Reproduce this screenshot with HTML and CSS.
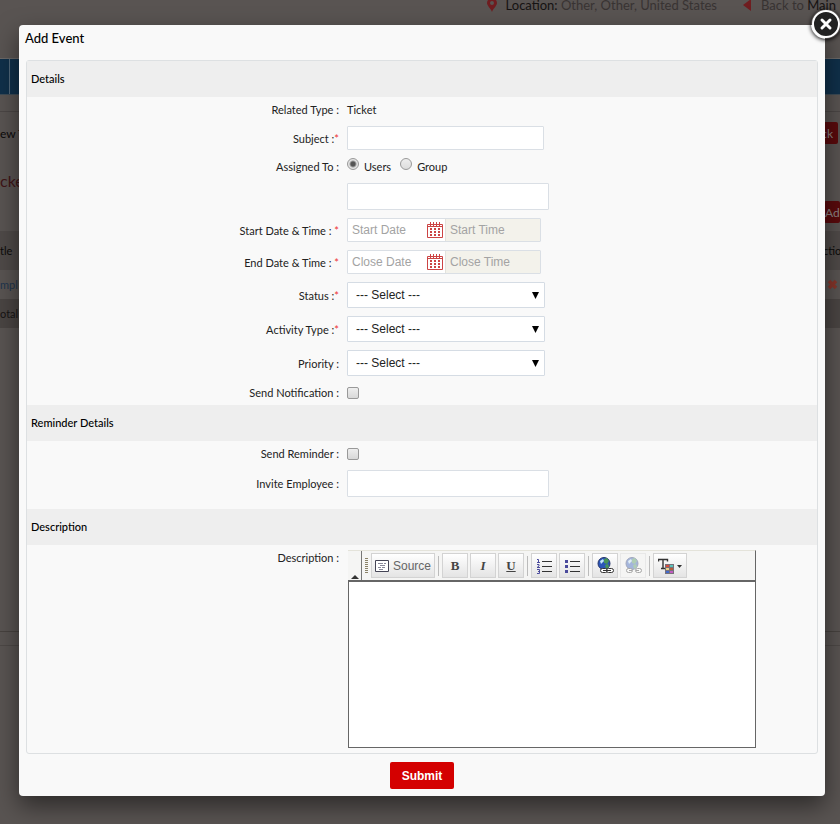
FILE: index.html
```html
<!DOCTYPE html>
<html lang="en">
<head>
<meta charset="utf-8">
<title>Add Event</title>
<link rel="stylesheet" href="styles.css">
</head>
<body>
<div class="page">
  <header class="topbar">
    <svg class="pin" width="10" height="14" viewBox="0 0 10 14"><path fill="#6f1d20" fill-rule="evenodd" d="M5 0a5 5 0 0 0-5 5c0 3 3.600 5 5 9 1.400-4 5-6 5-9a5 5 0 0 0-5-5zM5 3a2 2 0 1 1 0 4 2 2 0 0 1 0-4z"/></svg>
    <span class="place"><b>Location:</b> Other, Other, United States</span>
    <svg class="back-arrow" width="8" height="12" viewBox="0 0 8 12"><path fill="#6f1d20" d="M8 0v12L0 6z"/></svg>
    <span class="back">Back to <b>Main P</b></span>
  </header>
  <nav class="nav"><span class="nav-tab"></span></nav>
  <div class="title-row"><span class="page-title">ew T</span><button class="dark-button" type="button">ck</button></div>
  <div class="heading-row"><span class="ticket-title">cke</span></div>
  <div class="add-row"><button class="dark-button add" type="button">Add</button></div>
  <div class="list-row list-head"><span>tle</span><span class="head-action">ctio</span></div>
  <div class="list-row list-item"><a href="#">mpl</a><svg width="11" height="11" viewBox="0 0 11 11"><path d="M2 2l7 7M9 2l-7 7" stroke="#86352a" stroke-width="3.500"/></svg></div>
  <div class="list-row list-total"><span>otal R</span></div>
  <div class="list-end"></div>
  <footer class="footer"></footer>
</div>

<div class="overlay">
  <div class="modal" role="dialog" aria-labelledby="modal-title">
    <button class="close" type="button" aria-label="Close">
      <svg width="30" height="30" viewBox="0 0 30 30"><circle cx="15" cy="15" r="13" fill="#222" stroke="#fff" stroke-width="2"/><path d="M11 11l8 8M19 11l-8 8" stroke="#fff" stroke-width="3" stroke-linecap="round"/></svg>
    </button>
    <h1 class="modal-title" id="modal-title">Add Event</h1>
    <form>
      <div class="panel">
        <h2 class="section-title">Details</h2>
        <div class="fields">
          <div class="row"><span class="label">Related Type :</span><span>Ticket</span></div>
          <div class="row"><label class="label" for="subject">Subject :<i>*</i></label><input class="text" id="subject" type="text"></div>
          <div class="row"><span class="label">Assigned To :</span>
            <div class="radios">
              <input class="radio" type="radio" name="assigned" id="users" checked><label for="users">Users</label>
              <input class="radio" type="radio" name="assigned" id="group"><label for="group">Group</label>
            </div>
          </div>
          <div class="row"><span></span><input class="text tokens" type="text" aria-label="Assigned users"></div>
          <div class="row"><label class="label" for="start-date">Start Date &amp; Time : <i>*</i></label>
            <div class="datetime"><input class="date" id="start-date" type="text" placeholder="Start Date">
              <button class="calendar" type="button" aria-label="Pick start date"><svg width="16" height="17" viewBox="0 0 16 17"><path d="M.5 2.500h15v13h-15z" fill="#fff" stroke="#c44"/><path d="M1 4.500h14" stroke="#c44"/><path d="M3.500 0v4M6.500 0v4M9.500 0v4M12.500 0v4" stroke="#c44"/><path d="M3 7h10M3 10h10M3 13h10" stroke="#c44" stroke-width="2" stroke-dasharray="2"/></svg></button>
              <input class="time" type="text" placeholder="Start Time" aria-label="Start Time"></div></div>
          <div class="row"><label class="label" for="end-date">End Date &amp; Time : <i>*</i></label>
            <div class="datetime"><input class="date" id="end-date" type="text" placeholder="Close Date">
              <button class="calendar" type="button" aria-label="Pick close date"><svg width="16" height="17" viewBox="0 0 16 17"><path d="M.5 2.500h15v13h-15z" fill="#fff" stroke="#c44"/><path d="M1 4.500h14" stroke="#c44"/><path d="M3.500 0v4M6.500 0v4M9.500 0v4M12.500 0v4" stroke="#c44"/><path d="M3 7h10M3 10h10M3 13h10" stroke="#c44" stroke-width="2" stroke-dasharray="2"/></svg></button>
              <input class="time" type="text" placeholder="Close Time" aria-label="Close Time"></div></div>
          <div class="row"><label class="label" for="status">Status :<i>*</i></label><div class="select"><select id="status"><option>--- Select ---</option></select><svg width="7" height="7" viewBox="0 0 7 7"><path d="M0 0h7L3.500 7z"/></svg></div></div>
          <div class="row"><label class="label" for="activity">Activity Type :<i>*</i></label><div class="select"><select id="activity"><option>--- Select ---</option></select><svg width="7" height="7" viewBox="0 0 7 7"><path d="M0 0h7L3.500 7z"/></svg></div></div>
          <div class="row"><label class="label" for="priority">Priority :</label><div class="select"><select id="priority"><option>--- Select ---</option></select><svg width="7" height="7" viewBox="0 0 7 7"><path d="M0 0h7L3.500 7z"/></svg></div></div>
          <div class="row"><label class="label" for="notify">Send Notification :</label><input class="check" id="notify" type="checkbox"></div>
        </div>
        <h2 class="section-title">Reminder Details</h2>
        <div class="fields reminder">
          <div class="row"><label class="label" for="remind">Send Reminder :</label><input class="check" id="remind" type="checkbox"></div>
          <div class="row"><label class="label" for="invite">Invite Employee :</label><input class="text tokens" id="invite" type="text"></div>
        </div>
        <h2 class="section-title">Description</h2>
        <div class="fields">
          <div class="row row-top"><label class="label" for="description">Description :</label>
            <div class="editor">
              <div class="toolbar">
                <button class="collapse" type="button" aria-label="Collapse toolbar"><svg width="8" height="4" viewBox="0 0 8 4"><path d="M0 4l4-4 4 4z" fill="#333"/></svg></button>
                <span class="grip"></span>
                <button class="tool source" type="button"><svg width="14" height="12" viewBox="0 0 14 12"><path d="M.5.5h13v11H.5z" fill="#fff" stroke="#445"/><path d="M3 3.500h5M9 3.500h2M5 5.500h5M3 7.500h3M7 7.500h3M4 9.500h4" stroke="#889"/></svg>Source</button>
                <span class="divider"></span>
                <button class="tool glyph" type="button">B</button>
                <button class="tool glyph italic" type="button">I</button>
                <button class="tool glyph under" type="button">U</button>
                <span class="divider"></span>
                <button class="tool" type="button" aria-label="Numbered list"><svg width="16" height="16" viewBox="0 0 16 16"><path d="M6 3.500h10M6 8.500h10M6 13.500h10" stroke="#333"/><path d="M1 1.500h1.500v3M1 4.500h3M1 6.500h2v1.500l-2 1.500h3M1 11.500h2.500v4H1M2 13.500h1" fill="none" stroke="#4a4a9c"/></svg></button>
                <button class="tool" type="button" aria-label="Bulleted list"><svg width="16" height="16" viewBox="0 0 16 16"><path d="M6 3.500h10M6 8.500h10M6 13.500h10" stroke="#333"/><path d="M1 2h3v3H1zM1 7h3v3H1zM1 12h3v3H1z" fill="#4a4a9c"/></svg></button>
                <span class="divider"></span>
                <button class="tool" type="button" aria-label="Link"><svg width="17" height="17" viewBox="0 0 17 17"><circle cx="7" cy="6.500" r="6" fill="#2c56b8" stroke="#26356b"/><path d="M7 2l3-1 2 3-2 3-3-1zM8 8l3-1 1 3-3 2z" fill="#489458"/><path d="M3 4l3-2 1 2-3 3z" fill="#c4e6fa"/><rect x="3.500" y="11.500" width="7" height="4" rx="2" fill="#fff" stroke="#333"/><rect x="9.500" y="11.500" width="7" height="4" rx="2" fill="#fff" stroke="#333"/><path d="M6 13.500h8" stroke="#333"/></svg></button>
                <button class="tool off" type="button" aria-label="Unlink" disabled><svg width="17" height="17" viewBox="0 0 17 17"><circle cx="7" cy="6.500" r="6" fill="#2c56b8" stroke="#26356b"/><path d="M7 2l3-1 2 3-2 3-3-1zM8 8l3-1 1 3-3 2z" fill="#489458"/><path d="M3 4l3-2 1 2-3 3z" fill="#c4e6fa"/><rect x="1.500" y="11.500" width="6" height="4" rx="2" fill="#fff" stroke="#333"/><rect x="10.500" y="11.500" width="6" height="4" rx="2" fill="#fff" stroke="#333"/><path d="M4 13.500h3M11 13.500h3" stroke="#333"/></svg></button>
                <span class="divider"></span>
                <button class="tool colour" type="button" aria-label="Text colour"><svg width="25" height="16" viewBox="0 0 25 16"><path d="M.5 3.500v-2h9v2M5 1.500v9M3 10.500h4" fill="none" stroke="#333" stroke-width="1.400"/><path d="M7 6h9v10H7z" fill="#78727a"/><path d="M8 7h3v2H8z" fill="#d94c3c"/><path d="M12 7h3v2h-3z" fill="#5cc3ba"/><path d="M8 10h3v2H8z" fill="#e8d18a"/><path d="M12 10h3v2h-3z" fill="#b65d38"/><path d="M8 13h3v2H8z" fill="#4169cc"/><path d="M12 13h3v2h-3z" fill="#c25bc2"/><path d="M19 7h5l-2.500 3z" fill="#333"/></svg></button>
              </div>
              <textarea class="editor-text" id="description"></textarea>
            </div>
          </div>
        </div>
      </div>
      <div class="actions"><button class="submit" type="submit">Submit</button></div>
    </form>
  </div>
</div>
</body>
</html>
```
FILE: styles.css
```css
* { box-sizing: border-box; }
body {
  margin: 0;
  min-height: 100vh;
  overflow: hidden;
  background: #595452;
  color: #222;
  font: 11px/17px Lato, sans-serif;
}
button, input, select, textarea { margin: 0; font-family: "Liberation Sans", Arial, sans-serif; }
button { padding: 0; cursor: pointer; }

/* Dimmed page */
.page { overflow: hidden; height: 100vh; display: flex; flex-direction: column; }
.topbar {
  flex: none;
  display: flex;
  align-items: flex-start;
  justify-content: flex-end;
  height: 58px;
  white-space: nowrap;
  color: #383332;
  font-size: 13px;
  line-height: 11px;
}
.topbar b { font-weight: 400; color: #161313; }
.pin { margin-right: 9px; margin-top: -2px; }
.place { margin-right: 26px; }
.back-arrow { margin-right: 10px; margin-top: -1px; }
.back { width: 79px; }
.nav { flex: none; height: 37px; background: #10304a; border-top: 1px solid #6b6867; border-bottom: 1px solid #3d4b55; }
.nav-tab { display: block; width: 10px; height: 100%; border-right: 1px solid #52687a; }
.title-row {
  flex: none;
  display: flex;
  justify-content: space-between;
  align-items: center;
  height: 43px;
  margin-top: 16px;
  border-top: 1px solid #4b4645;
  padding-right: 2px;
}
.page-title { color: #0c0a0a; font-size: 12px; }
.dark-button {
  width: 26px;
  height: 22px;
  border: 0;
  border-radius: 2px;
  background: #590a0c;
  color: #8b8383;
  font: 12px Lato, sans-serif;
  text-align: right;
  padding-right: 5px;
}
.heading-row { flex: none; height: 47px; padding-top: 18px; }
.ticket-title { color: #3f1517; font-size: 16px; }
.add-row { flex: none; display: flex; justify-content: flex-end; height: 30px; }
.add { padding: 0 0 0 1px; width: 16px; overflow: hidden; text-align: left; }
.list-row { flex: none; display: flex; justify-content: space-between; align-items: center; white-space: nowrap; color: #171414; }
.list-row svg { margin-right: 2px; }
.list-head { height: 39px; background: #4f4a48; color: #0c0a0a; }
.head-action { width: 17px; overflow: hidden; }
.list-item { height: 29px; }
.list-item a { color: #1d344e; text-decoration: none; }
.list-total { height: 29px; background: #4a4543; }
.list-end { flex: none; height: 304px; border-bottom: 1px solid #47423f; }
.footer { flex: auto; margin-top: 13px; border-top: 1px solid #4d4846; }

/* Dialog */
.overlay { position: absolute; inset: 0; padding: 25px 15px 28px 19px; }
.modal {
  position: relative;
  padding: 0 7px 7px;
  border-radius: 4px;
  background: #f9f9f9;
  box-shadow: 0 10px 25px rgba(0, 0, 0, .5);
}
.close { position: absolute; top: -16px; right: -16px; width: 30px; height: 30px; border: 0; border-radius: 50%; background: none; box-shadow: 0 1px 4px #000; }
.close svg { display: block; }
.modal-title { margin: 0 -1px; height: 35px; padding-top: 5px; color: #000; font-size: 13px; font-weight: 500; line-height: 17px; }
.panel { border: 1px solid #dde0e2; border-radius: 3px; }
.section-title { margin: 0; padding: 0 4px; background: #eee; color: #000; font-size: 11px; font-weight: 500; line-height: 36px; }
.fields { display: grid; gap: 8px; padding: 4px 0; }
.reminder { padding-bottom: 12px; }
.row { display: grid; grid-template-columns: 312px 1fr; column-gap: 8px; align-items: center; min-height: 17px; }
.row-top { align-items: start; }
.label { text-align: right; }
.label i { color: #e33; font-style: normal; }
.text { width: 197px; height: 24px; border: 1px solid #dadfe5; border-radius: 1px; background: #fff; padding: 0 4px; font-size: 13px; }
.tokens { width: 202px; height: 27px; }

.radios { display: flex; align-items: center; height: 17px; }
.radios label { margin: 0 9px 0 5px; }
.radio { appearance: none; align-self: flex-start; width: 12px; height: 12px; border: 1px solid #999; border-radius: 50%; background: linear-gradient(#eee, #ddd); }
.radio:checked { background: radial-gradient(circle, #555 0 2px, #e4e4e4 4px); }
.check { appearance: none; width: 12px; height: 12px; border: 1px solid #999; border-radius: 2px; background: linear-gradient(#eee, #d8d8d8); }

.datetime { display: flex; align-items: center; width: 194px; height: 24px; border: 1px solid #dadfe5; border-radius: 1px; background: #fff; }
.datetime input { height: 22px; border: 0; padding: 0 4px; font-size: 12px; background: none; min-width: 0; }
.datetime input::placeholder { color: #a3a3a3; opacity: 1; }
.datetime .date { width: 79px; }
.datetime .time { flex: 1; margin-left: 2px; border-left: 1px solid #e3e3dd; background: #f3f2eb; }
.calendar { width: 16px; height: 18px; border: 0; background: none; }
.calendar svg { display: block; }

.select { position: relative; width: 198px; }
.select select { appearance: none; display: block; width: 100%; height: 26px; border: 1px solid #d5dce4; border-radius: 1px; background: #fff; color: #222; padding: 0 8px; font-size: 12px; }
.select svg { position: absolute; right: 6px; top: 10px; pointer-events: none; }

/* Rich text editor */
.editor { width: 408px; max-width: 100%; margin: 1px 0 1px 1px; }
.toolbar { display: flex; align-items: center; height: 30px; border-top: 1px solid #e4e3da; border-right: 1px solid #666; background: #f5f5f4; gap: 2px; }
.collapse { display: flex; align-items: flex-end; justify-content: center; align-self: stretch; width: 14px; border: 0; border-right: 1px solid #777; background: none; padding-bottom: 1px; }
.grip { width: 3px; height: 16px; margin: 0 1px; background: repeating-linear-gradient(#8a8268 0 1px, transparent 1px 2px); }
.tool { display: flex; align-items: center; justify-content: center; width: 26px; height: 25px; border: 1px solid #d3d3d3; background: linear-gradient(#fff, #e4e4e4); color: #444; font-size: 12px; }
.source { width: 64px; gap: 4px; color: #666; }
.glyph { font: bold 13px "Liberation Serif", serif; }
.italic { font-style: italic; }
.under { text-decoration: underline; }
.off { border-color: #e8e8e8; background: #f5f5f4; }
.off svg { opacity: .4; }
.colour { width: 34px; }
.divider { width: 1px; height: 20px; margin: 0 1px; background: #bbb; }
.editor-text { display: block; width: 100%; height: 168px; border: 1px solid #666; border-top: 2px solid #666; border-radius: 0; resize: none; background: #fff; padding: 4px; font-size: 12px; }

.actions { display: flex; justify-content: center; padding-top: 8px; }
.submit { width: 64px; height: 27px; border: 0; border-radius: 2px; background: #d40000; color: #fff; font-size: 12px; font-weight: 700; }
```
